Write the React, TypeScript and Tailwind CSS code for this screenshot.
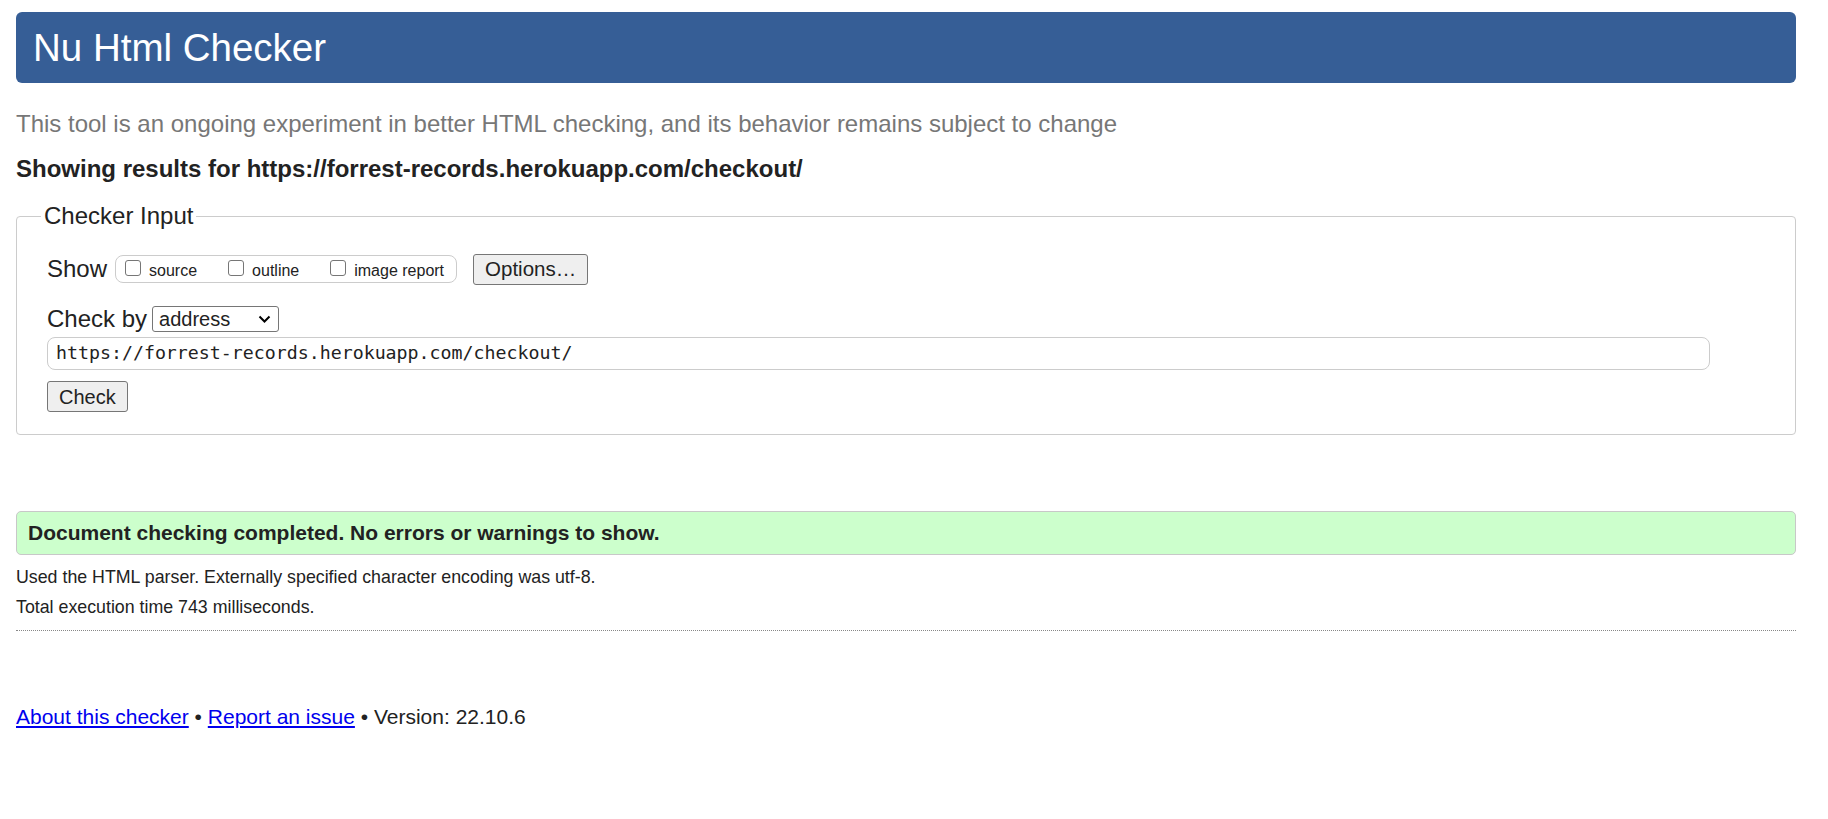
import React from 'react';

const Checkbox: React.FC<{ label: string }> = ({ label }) => (
  <label className="flex items-center">
    <span className="w-[16px] h-[16px] mb-[3px] border border-[#767676] rounded-[3px] bg-white"></span>
    <span className="ml-[8px] mt-[3px] text-[16px] leading-[18px]">{label}</span>
  </label>
);

const App: React.FC = () => {
  return (
    <div className="min-h-screen bg-white text-[#222] font-['Liberation_Sans',Arial,sans-serif]">
      <div className="pl-4 pr-8 pt-3">
        {/* Header */}
        <header className="h-[71px] bg-[#365e96] rounded-[6px] flex items-center pl-[17px] pt-[2px]">
          <h1 className="text-[38.5px] leading-none text-white">Nu Html Checker</h1>
        </header>

        <p className="mt-[27px] text-[24px] leading-[28px] text-[#777]">
          This tool is an ongoing experiment in better HTML checking, and its behavior remains subject to change
        </p>
        <p className="mt-[17px] text-[24px] leading-[28px] font-bold">
          Showing results for https://forrest-records.herokuapp.com/checkout/
        </p>

        {/* Checker Input */}
        <fieldset className="mt-[19px] border border-[#ccc] rounded-[4px] px-[30px] pb-[22px]">
          <legend className="-ml-[6px] px-[3px] text-[24px] leading-[28px]">Checker Input</legend>
          <div className="pt-[24px]">
            <div className="h-[30px] flex items-center">
              <span className="text-[24px] leading-[28px]">Show</span>
              <div className="ml-[8px] h-[28px] flex items-center gap-[31px] pl-[9px] pr-[12px] border border-[#ccc] rounded-[8px]">
                <Checkbox label="source" />
                <Checkbox label="outline" />
                <Checkbox label="image report" />
              </div>
              <button className="ml-[16px] h-[31px] px-[11px] text-[20.5px] leading-none bg-[#efefef] border border-[#767676] rounded-[3px]">
                Options…
              </button>
            </div>

            <div className="mt-[22px] h-[26px] flex items-center">
              <span className="text-[24px] leading-[28px]">Check by</span>
              <div className="ml-[5px] w-[127px] h-[26px] flex items-center justify-between pl-[6px] pr-[7px] border border-[#767676] rounded-[3px] bg-white">
                <span className="text-[20px] leading-none">address</span>
                <svg width="13" height="8" viewBox="0 0 13 8" fill="none">
                  <path d="M1.5 1.5 L6.5 6.5 L11.5 1.5" stroke="#000" strokeWidth="2" />
                </svg>
              </div>
            </div>

            <div className="mt-[5px] w-[1663px] h-[33px] flex items-center pl-[8px] border border-[#ccc] rounded-[8px]">
              <span className="font-['DejaVu_Sans_Mono',monospace] text-[18.25px] leading-none">
                https://forrest-records.herokuapp.com/checkout/
              </span>
            </div>

            <button className="mt-[11px] h-[31px] px-[11px] text-[20px] leading-none bg-[#efefef] border border-[#767676] rounded-[3px]">
              Check
            </button>
          </div>
        </fieldset>

        {/* Result */}
        <div className="mt-[76px] h-[44px] flex items-center pl-[11px] bg-[#ccffcc] border border-[#c8c8c8] rounded-[5px]">
          <span className="text-[21px] font-bold">Document checking completed. No errors or warnings to show.</span>
        </div>
        <p className="mt-[7px] text-[17.8px] leading-[30px]">
          Used the HTML parser. Externally specified character encoding was utf-8.
        </p>
        <p className="text-[17.8px] leading-[30px]">Total execution time 743 milliseconds.</p>
        <div className="mt-[8px] border-t border-dotted border-[#888]"></div>

        {/* Footer */}
        <p className="mt-[71px] text-[21px] leading-[30px]">
          <a href="#" className="text-[#0000ee] underline">About this checker</a>
          {' • '}
          <a href="#" className="text-[#0000ee] underline">Report an issue</a>
          {' • Version: 22.10.6'}
        </p>
      </div>
    </div>
  );
};

export default App;
